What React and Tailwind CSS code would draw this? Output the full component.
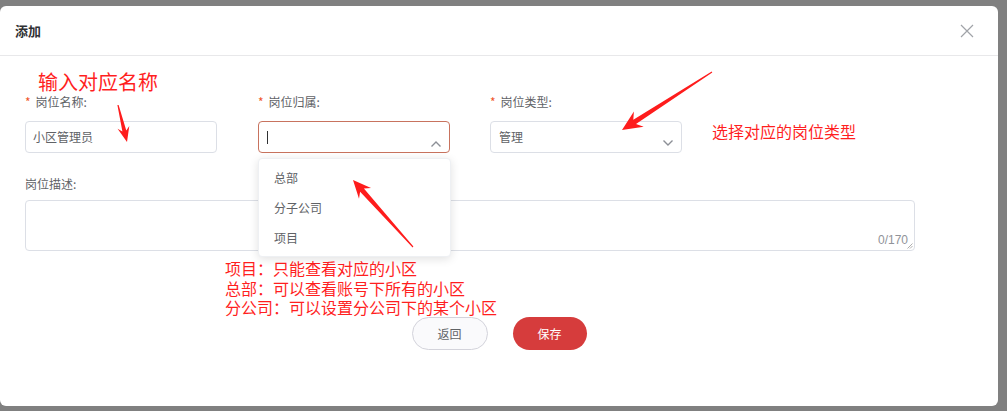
import React from "react";

function arrowPoints(tx, ty, px, py, headLen, headHalf, shaftW) {
  const dx = px - tx, dy = py - ty;
  const L = Math.hypot(dx, dy);
  const ux = dx / L, uy = dy / L;
  const nx = -uy, ny = ux;
  const bx = px - ux * headLen, by = py - uy * headLen;
  const cx = px - ux * headLen * 0.75, cy = py - uy * headLen * 0.75;
  const pts = [
    [tx + nx * 0.6, ty + ny * 0.6],
    [cx + nx * shaftW / 2, cy + ny * shaftW / 2],
    [bx + nx * headHalf, by + ny * headHalf],
    [px, py],
    [bx - nx * headHalf, by - ny * headHalf],
    [cx - nx * shaftW / 2, cy - ny * shaftW / 2],
    [tx - nx * 0.6, ty - ny * 0.6],
  ];
  return pts.map((p) => p.map((v) => v.toFixed(1)).join(",")).join(" ");
}

const font = { fontFamily: '"Noto Sans CJK SC", "Noto Sans", sans-serif' };

function Label({ children, required }) {
  return (
    <div className="h-[20px] flex items-center text-[12px] text-[#606266] leading-[20px]">
      {required && <span className="text-[#f0552a] mr-[5px] text-[12px]">*</span>}
      <span>{children}</span>
    </div>
  );
}

export default function App() {
  return (
    <div className="relative w-[1007px] h-[411px] bg-[#808080] overflow-hidden" style={font}>
      <div className="absolute left-0 top-[6px] w-[998px] h-[400px] bg-white rounded-[6px] flex flex-col">
        {/* header */}
        <div className="h-[50px] border-b border-[#e8e8ea] flex items-center justify-between pl-[15px] pr-[24px]">
          <span className="text-[13px] font-bold text-[#303133]">添加</span>
          <svg width="14" height="14" viewBox="0 0 14 14" className="mt-[1px]">
            <path d="M1 1 L13 13 M13 1 L1 13" stroke="#a0a3a8" strokeWidth="1.2" fill="none" />
          </svg>
        </div>

        {/* body */}
        <div className="pl-[25px] pt-[36px] flex flex-col">
          <div className="flex">
            <div className="w-[192px] flex flex-col">
              <Label required>岗位名称:</Label>
              <div className="mt-[9px] h-[32px] border border-[#dcdfe6] rounded-[4px] flex items-center px-[7px] text-[12px] text-[#606266]">
                小区管理员
              </div>
            </div>
            <div className="ml-[41px] w-[192px] flex flex-col relative">
              <Label required>岗位归属:</Label>
              <div className="mt-[9px] h-[32px] border border-[#c8735e] rounded-[4px] flex items-center justify-between pl-[8px] pr-[7px]">
                <span className="w-px h-[13px] bg-[#303133]" />
                <svg width="12" height="8" viewBox="0 0 12 8" className="mt-[13px]">
                  <path d="M1.5 6.5 L6 2 L10.5 6.5" stroke="#8c8f96" strokeWidth="1.4" fill="none" />
                </svg>
              </div>
              <div className="absolute left-0 top-[66px] w-[193px] h-[99px] bg-white rounded-[4px] shadow-[0_2px_10px_rgba(0,0,0,0.12)] border border-[#eef0f3] flex flex-col pt-[4px] z-10">
                <div className="h-[30px] flex items-center pl-[15px] text-[12px] text-[#606266]">总部</div>
                <div className="h-[30px] flex items-center pl-[15px] text-[12px] text-[#606266]">分子公司</div>
                <div className="h-[30px] flex items-center pl-[15px] text-[12px] text-[#606266]">项目</div>
              </div>
            </div>
            <div className="ml-[40px] w-[192px] flex flex-col">
              <Label required>岗位类型:</Label>
              <div className="mt-[9px] h-[32px] border border-[#dcdfe6] rounded-[4px] flex items-center justify-between pl-[8px] pr-[7px] text-[12px] text-[#606266]">
                <span>管理</span>
                <svg width="12" height="8" viewBox="0 0 12 8" className="mt-[11px]">
                  <path d="M1.5 1.5 L6 6 L10.5 1.5" stroke="#8c8f96" strokeWidth="1.4" fill="none" />
                </svg>
              </div>
            </div>
          </div>

          <div className="mt-[21px]">
            <Label>岗位描述:</Label>
          </div>
          <div className="mt-[6px] w-[890px] h-[51px] border border-[#dcdfe6] rounded-[4px] relative">
            <span className="absolute right-[6px] bottom-[1px] text-[12px] text-[#909399]" style={{ fontFamily: '"Liberation Sans", Arial, sans-serif' }}>0/170</span>
            <svg width="6" height="6" viewBox="0 0 6 6" className="absolute right-[1px] bottom-[1px]">
              <path d="M5.5 0.5 L0.5 5.5 M5.5 3 L3 5.5" stroke="#999" strokeWidth="0.8" />
            </svg>
          </div>

          <div className="mt-[66px] w-[948px] flex justify-center gap-[25px]">
            <button className="w-[76px] h-[33px] rounded-full border border-[#d3d3db] bg-[#fafafc] text-[12px] text-[#606266]">返回</button>
            <button className="w-[74px] h-[33px] rounded-full bg-[#d63c3c] text-[12px] text-white">保存</button>
          </div>
        </div>
      </div>

      {/* annotations */}
      <div className="absolute left-[38px] top-[71px] text-[20px] leading-[22px] text-[#ff1f1f]">输入对应名称</div>
      <div className="absolute left-[712px] top-[120px] text-[16px] leading-[22px] text-[#ff1f1f]">选择对应的岗位类型</div>
      <div className="absolute left-[225px] top-[259px] text-[16px] leading-[19.5px] text-[#ff1f1f] flex flex-col">
        <div className="h-[19.5px] leading-[18px]">项目：只能查看对应的小区</div>
        <div className="h-[19.5px] leading-[18px]">总部：可以查看账号下所有的小区</div>
        <div className="h-[19.5px] leading-[18px]">分公司：可以设置分公司下的某个小区</div>
      </div>
      <svg className="absolute left-0 top-0 pointer-events-none z-20" width="1007" height="411">
        <polygon points={arrowPoints(118, 105, 127, 142, 15, 6, 4)} fill="#fe1c1c" />
        <polygon points={arrowPoints(413, 247, 353, 180, 18, 8, 5)} fill="#fe1c1c" />
        <polygon points={arrowPoints(712, 72, 622, 130, 20, 9, 5)} fill="#fe1c1c" />
      </svg>
    </div>
  );
}
